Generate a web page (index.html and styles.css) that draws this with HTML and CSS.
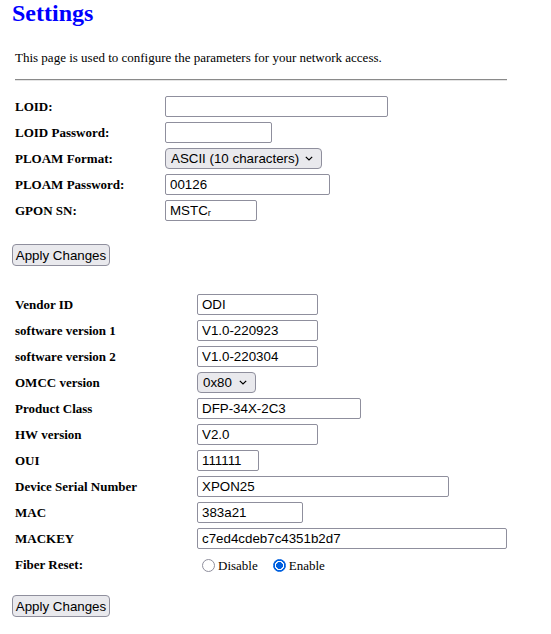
FILE: index.html
```html
<!DOCTYPE html>
<html>
<head>
<meta charset="utf-8">
<title>Settings</title>
<link rel="stylesheet" href="styles.css">
</head>
<body>
<div class="page">
  <h1 class="title">Settings</h1>
  <p class="intro">This page is used to configure the parameters for your network access.</p>
  <hr class="rule">

  <form class="form-block">
    <div class="grid grid-a">
      <label class="lbl">LOID:</label>
      <div class="cell"><input class="txt w223" type="text" value=""></div>
      <label class="lbl">LOID Password:</label>
      <div class="cell"><input class="txt w107" type="password" value=""></div>
      <label class="lbl">PLOAM Format:</label>
      <div class="cell"><select class="sel w157"><option>ASCII (10 characters)</option></select></div>
      <label class="lbl">PLOAM Password:</label>
      <div class="cell"><input class="txt w165" type="text" value="00126"></div>
      <label class="lbl">GPON SN:</label>
      <div class="cell"><input class="txt w92" type="text" value="MSTC&#x1D63;"></div>
    </div>
    <div class="actions first"><button type="button" class="btn">Apply Changes</button></div>
  </form>

  <form class="form-block second">
    <div class="grid grid-b">
      <label class="lbl">Vendor ID</label>
      <div class="cell"><input class="txt w121" type="text" value="ODI"></div>
      <label class="lbl">software version 1</label>
      <div class="cell"><input class="txt w121" type="text" value="V1.0-220923"></div>
      <label class="lbl">software version 2</label>
      <div class="cell"><input class="txt w121" type="text" value="V1.0-220304"></div>
      <label class="lbl">OMCC version</label>
      <div class="cell"><select class="sel w59"><option>0x80</option></select></div>
      <label class="lbl">Product Class</label>
      <div class="cell"><input class="txt w164" type="text" value="DFP-34X-2C3"></div>
      <label class="lbl">HW version</label>
      <div class="cell"><input class="txt w121" type="text" value="V2.0"></div>
      <label class="lbl">OUI</label>
      <div class="cell"><input class="txt w62" type="text" value="111111"></div>
      <label class="lbl">Device Serial Number</label>
      <div class="cell"><input class="txt w252" type="text" value="XPON25"></div>
      <label class="lbl">MAC</label>
      <div class="cell"><input class="txt w106" type="text" value="383a21"></div>
      <label class="lbl">MACKEY</label>
      <div class="cell"><input class="txt w310" type="text" value="c7ed4cdeb7c4351b2d7"></div>
      <label class="lbl">Fiber Reset:</label>
      <div class="cell radios">
        <label class="opt"><span class="radio"></span>Disable</label>
        <label class="opt"><span class="radio on"></span>Enable</label>
      </div>
    </div>
    <div class="actions last"><button type="button" class="btn">Apply Changes</button></div>
  </form>
</div>
</body>
</html>
```

FILE: styles.css
```css
html, body {
  margin: 0;
  padding: 0;
  background: #ffffff;
}

.page {
  padding: 0 0 0 12px;
  width: 495px;
  font-family: "Liberation Serif", "Times New Roman", serif;
  color: #000;
}

.title {
  margin: 0;
  font-size: 24px;
  line-height: 27px;
  font-weight: bold;
  color: #0000ff;
}

.intro {
  margin: 23px 0 0 3px;
  font-size: 13px;
  line-height: 15px;
}

.rule {
  margin: 14px 0 0 3px;
  height: 0;
  border: 0;
  border-top: 1px solid #8a8a8a;
  border-bottom: 1px solid #e4e4e4;
}

.form-block {
  margin: 15px 0 0 0;
}

.form-block.second {
  margin-top: 28px;
}

.grid {
  display: grid;
  row-gap: 5px;
  padding-left: 3px;
}

.grid-a {
  grid-template-columns: 150px auto;
}

.grid-b {
  grid-template-columns: 182px auto;
}

.lbl {
  display: flex;
  align-items: center;
  height: 21px;
  font-size: 13px;
  line-height: 15px;
  font-weight: bold;
}

.cell {
  display: flex;
  align-items: center;
  height: 21px;
}

.txt {
  box-sizing: border-box;
  height: 21px;
  margin: 0;
  padding: 0 4px;
  border: 1px solid #8f8f9d;
  border-radius: 2px;
  background: #fff;
  font-family: "Liberation Sans", Arial, sans-serif;
  font-size: 13.33px;
  color: #000;
  outline: none;
}

.sel {
  box-sizing: border-box;
  height: 21px;
  margin: 0;
  padding: 0 18px 0 5px;
  border: 1px solid #8f8f9d;
  border-radius: 4px;
  background-color: #e9e9ed;
  background-image: url("data:image/svg+xml,%3Csvg xmlns='http://www.w3.org/2000/svg' width='8' height='5' viewBox='0 0 8 5'%3E%3Cpath d='M0.8 0.8 L4 4 L7.2 0.8' fill='none' stroke='%23000' stroke-width='1.2'/%3E%3C/svg%3E");
  background-repeat: no-repeat;
  background-position: right 8px center;
  -webkit-appearance: none;
  appearance: none;
  font-family: "Liberation Sans", Arial, sans-serif;
  font-size: 13.33px;
  color: #000;
}

.w59 { width: 59px; }
.w62 { width: 62px; }
.w92 { width: 92px; }
.w106 { width: 106px; }
.w107 { width: 107px; }
.w121 { width: 121px; }
.w157 { width: 157px; }
.w164 { width: 164px; }
.w165 { width: 165px; }
.w223 { width: 223px; }
.w252 { width: 252px; }
.w310 { width: 310px; }

.radios {
  box-sizing: border-box;
  padding-top: 2px;
  font-size: 13px;
  gap: 10px;
}

.opt {
  display: flex;
  align-items: center;
  font-size: 13px;
  line-height: 15px;
}

.radio {
  box-sizing: border-box;
  display: inline-block;
  width: 13px;
  height: 13px;
  margin: 0 3px 0 5px;
  border: 1px solid #8f8f9d;
  border-radius: 50%;
  background: #fff;
}

.radio.on {
  border: 1px solid #0060df;
  background: radial-gradient(circle, #0060df 0 3.2px, #ffffff 3.7px 4.4px, #0060df 4.9px);
}

.actions {
  display: flex;
}

.actions.first {
  margin-top: 23px;
}

.actions.last {
  margin-top: 20px;
}

.btn {
  box-sizing: border-box;
  height: 22px;
  width: 98px;
  margin: 0;
  padding: 0;
  white-space: nowrap;
  border: 1px solid #8f8f9d;
  border-radius: 4px;
  background: #e9e9ed;
  font-family: "Liberation Sans", Arial, sans-serif;
  font-size: 13.33px;
  color: #000;
}
```
